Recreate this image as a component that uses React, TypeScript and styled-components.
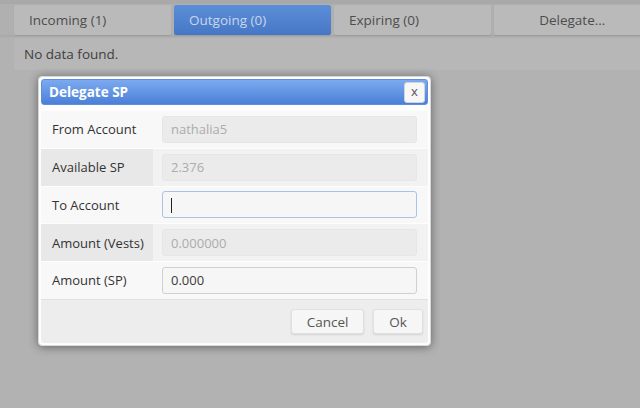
import React from 'react';
import styled, { createGlobalStyle } from 'styled-components';

const GlobalStyle = createGlobalStyle`
  html, body {
    margin: 0;
    padding: 0;
    width: 640px;
    height: 408px;
    overflow: hidden;
    background: #b1b1b1;
    font-family: "Open Sans", "Liberation Sans", sans-serif;
  }
`;

const tabs = [
  { label: 'Incoming (1)', active: false, center: false },
  { label: 'Outgoing (0)', active: true, center: false },
  { label: 'Expiring (0)', active: false, center: false },
  { label: 'Delegate...', active: false, center: true },
];

const rows = [
  { label: 'From Account', value: 'nathalia5', disabled: true },
  { label: 'Available SP', value: '2.376', disabled: true },
  { label: 'To Account', value: '', disabled: false, focused: true },
  { label: 'Amount (Vests)', value: '0.000000', disabled: true },
  { label: 'Amount (SP)', value: '0.000', disabled: false },
];

export default function App() {
  return (
    <>
      <GlobalStyle />
      <Page>
        <TopStrip />
        <TabBar>
          {tabs.map((t) => (
            <Tab key={t.label} $active={t.active} $center={t.center}>
              {t.label}
            </Tab>
          ))}
        </TabBar>
        <Notice>No data found.</Notice>

        <Dialog>
          <TitleBar>
            <Title>Delegate SP</Title>
            <CloseButton>x</CloseButton>
          </TitleBar>
          <FormTable>
            {rows.map((r, i) => (
              <FormRow key={r.label} $alt={i % 2 === 1}>
                <LabelCell>{r.label}</LabelCell>
                <InputCell>
                  <Field
                    $disabled={r.disabled}
                    $focused={!!r.focused}
                    readOnly
                    value={r.value}
                  />
                  {r.focused && <Caret />}
                </InputCell>
              </FormRow>
            ))}
          </FormTable>
          <Footer>
            <FooterButton style={{ width: 73 }}>Cancel</FooterButton>
            <FooterButton style={{ width: 50 }}>Ok</FooterButton>
          </Footer>
        </Dialog>
      </Page>
    </>
  );
}

const Page = styled.div`
  position: relative;
  width: 640px;
  height: 408px;
  overflow: hidden;
  background: #b2b2b2;
`;

const TopStrip = styled.div`
  height: 4px;
  background: #a9a9a9;
`;

const TabBar = styled.div`
  display: flex;
  gap: 3.5px;
  padding: 1px 0 0 14px;
  height: 30px;
  background: #b0b0b0;
  box-shadow: 0 2px 2px rgba(0, 0, 0, 0.05);
`;

const Tab = styled.div<{ $active: boolean; $center: boolean }>`
  flex: 0 0 156.5px;
  box-sizing: border-box;
  height: 30px;
  display: flex;
  align-items: center;
  justify-content: ${(p) => (p.$center ? 'center' : 'flex-start')};
  padding: 0 ${(p) => (p.$center ? '0' : '15px')};
  font-size: 13.5px;
  border-radius: 2px;
  color: ${(p) => (p.$active ? '#c9d6ea' : '#4d4d4d')};
  background: ${(p) =>
    p.$active
      ? 'linear-gradient(#5b8ed8, #4677c6)'
      : '#bababa'};
  box-shadow: 0 1px 1px rgba(0, 0, 0, 0.08);
`;

const Notice = styled.div`
  margin: 3px 0 0 14px;
  height: 32px;
  padding-left: 10px;
  display: flex;
  align-items: center;
  font-size: 13.5px;
  color: #3f3f3f;
  background: #b7b7b7;
`;

const Dialog = styled.div`
  position: absolute;
  left: 38px;
  top: 76px;
  width: 393px;
  height: 270px;
  box-sizing: border-box;
  padding: 2px;
  background: #fdfdfd;
  border: 1px solid #d8d8d8;
  border-radius: 4px;
  box-shadow: 0 1px 10px rgba(0, 0, 0, 0.45);
  display: flex;
  flex-direction: column;
`;

const TitleBar = styled.div`
  height: 26px;
  box-sizing: border-box;
  display: flex;
  align-items: center;
  justify-content: space-between;
  padding: 0 2px 0 7px;
  border-radius: 3px;
  border: 1px solid #5d8fdc;
  background: linear-gradient(#7caaf0, #4b80d8);
`;

const Title = styled.span`
  color: #fff;
  font-weight: 700;
  font-size: 13.5px;
`;

const CloseButton = styled.div`
  width: 21px;
  height: 21px;
  margin-left: 1px;
  box-sizing: border-box;
  display: flex;
  align-items: center;
  justify-content: center;
  background: #f7f7f7;
  border: 1px solid #d4d4d4;
  border-radius: 3px;
  color: #555;
  font-size: 13px;
  padding-bottom: 2px;
`;

const FormTable = styled.div`
  display: flex;
  flex-direction: column;
  gap: 1px;
  padding: 6px 0 0 0;
`;

const FormRow = styled.div<{ $alt: boolean }>`
  display: grid;
  grid-template-columns: 112px 1fr;
  gap: 2px;
  height: 36.75px;
  background: ${(p) => (p.$alt ? '#f2f2f2' : '#f8f8f8')};
`;

const LabelCell = styled.div`
  display: flex;
  align-items: center;
  padding-left: 11px;
  font-size: 13px;
  color: #333;
  background: inherit;
  ${FormRow}:nth-child(even) & {
    background: #e8e8e8;
  }
`;

const InputCell = styled.div`
  position: relative;
  display: flex;
  align-items: center;
  padding: 0 11px 0 7px;
`;

const Field = styled.input<{ $disabled: boolean; $focused: boolean }>`
  width: 100%;
  height: 27px;
  box-sizing: border-box;
  padding: 0 8px;
  border-radius: 3px;
  font-family: inherit;
  font-size: 13px;
  outline: none;
  color: ${(p) => (p.$disabled ? '#acacac' : '#3a3a3a')};
  background: ${(p) => (p.$disabled ? '#ebebeb' : '#f6f6f6')};
  border: 1px solid
    ${(p) => (p.$focused ? '#a9c3e6' : p.$disabled ? '#e6e6e6' : '#d0d0d0')};
`;

const Caret = styled.span`
  position: absolute;
  left: 16px;
  top: 11px;
  width: 1px;
  height: 15px;
  background: #222;
`;

const Footer = styled.div`
  margin-top: auto;
  height: 44px;
  box-sizing: border-box;
  display: flex;
  justify-content: flex-end;
  align-items: center;
  gap: 9px;
  padding: 0 5px 0 0;
  background: #ededed;
  border-top: 1px solid #e2e2e2;
  border-radius: 0 0 3px 3px;
`;

const FooterButton = styled.div`
  height: 25px;
  box-sizing: border-box;
  display: flex;
  align-items: center;
  justify-content: center;
  font-size: 13.5px;
  color: #555;
  background: #f6f6f6;
  border: 1px solid #e0e0e0;
  border-radius: 3px;
  box-shadow: 0 1px 2px rgba(0, 0, 0, 0.12);
`;
